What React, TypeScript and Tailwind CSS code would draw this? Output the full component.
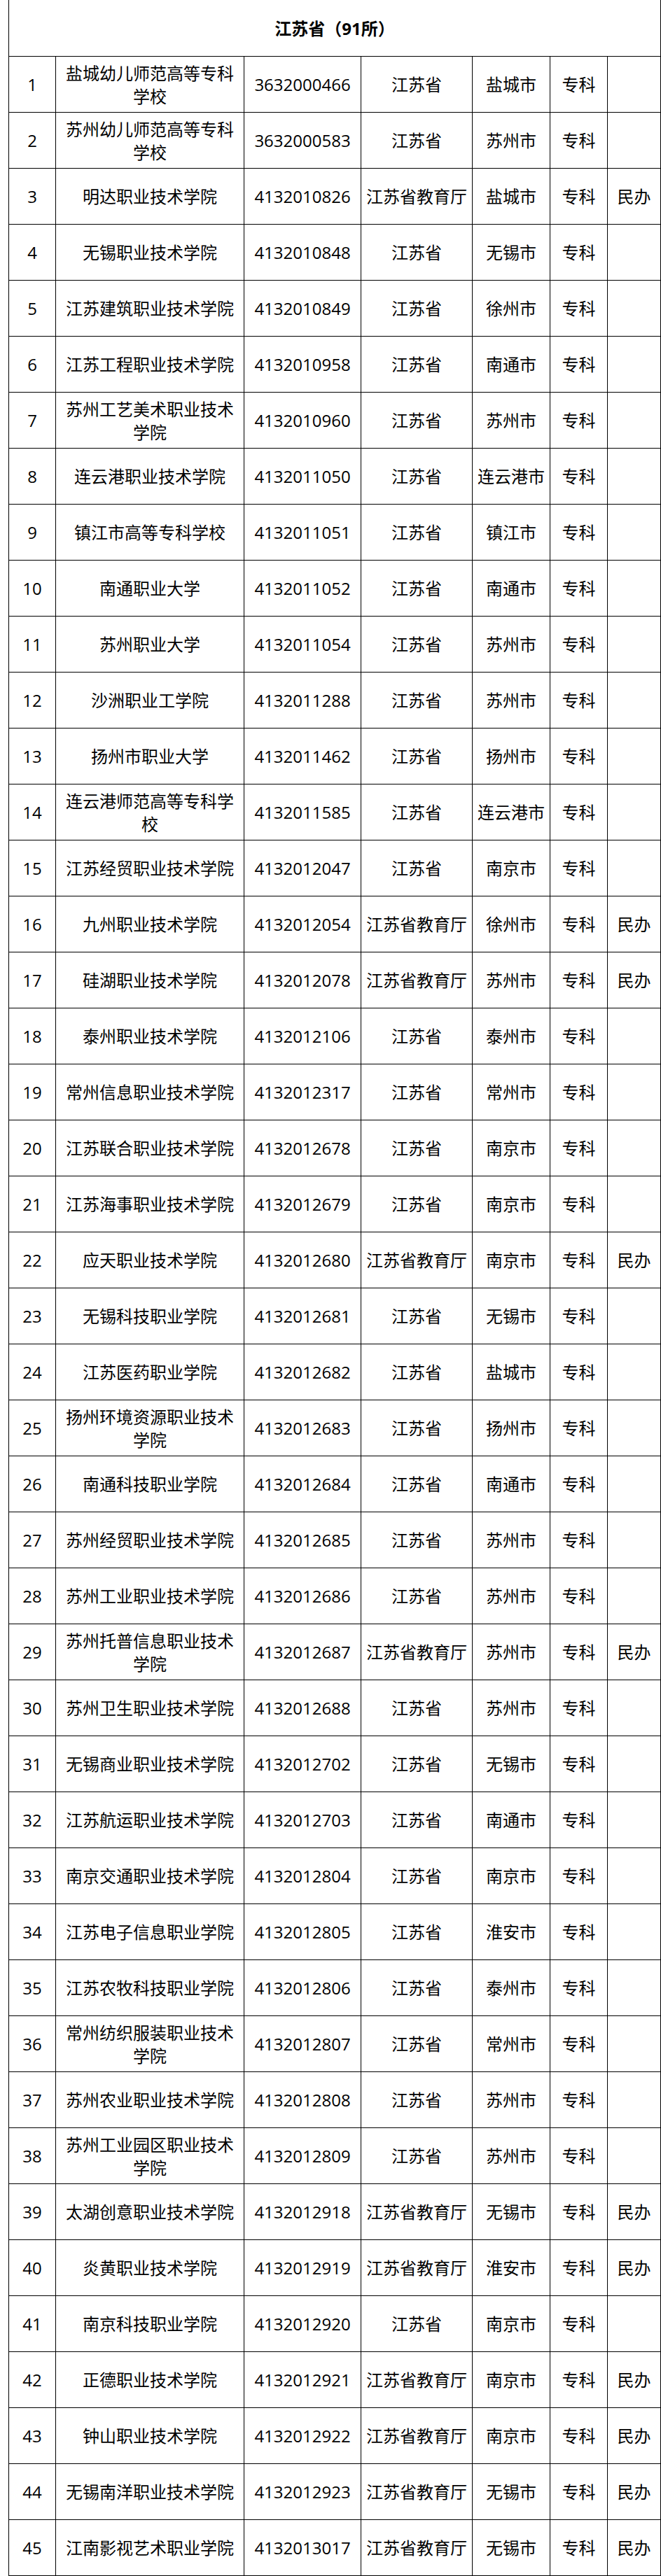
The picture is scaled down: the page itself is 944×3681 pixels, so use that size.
const rows: [string, string, string, string, string][] = [
  ["盐城幼儿师范高等专科学校", "3632000466", "江苏省", "盐城市", ""],
  ["苏州幼儿师范高等专科学校", "3632000583", "江苏省", "苏州市", ""],
  ["明达职业技术学院", "4132010826", "江苏省教育厅", "盐城市", "民办"],
  ["无锡职业技术学院", "4132010848", "江苏省", "无锡市", ""],
  ["江苏建筑职业技术学院", "4132010849", "江苏省", "徐州市", ""],
  ["江苏工程职业技术学院", "4132010958", "江苏省", "南通市", ""],
  ["苏州工艺美术职业技术学院", "4132010960", "江苏省", "苏州市", ""],
  ["连云港职业技术学院", "4132011050", "江苏省", "连云港市", ""],
  ["镇江市高等专科学校", "4132011051", "江苏省", "镇江市", ""],
  ["南通职业大学", "4132011052", "江苏省", "南通市", ""],
  ["苏州职业大学", "4132011054", "江苏省", "苏州市", ""],
  ["沙洲职业工学院", "4132011288", "江苏省", "苏州市", ""],
  ["扬州市职业大学", "4132011462", "江苏省", "扬州市", ""],
  ["连云港师范高等专科学校", "4132011585", "江苏省", "连云港市", ""],
  ["江苏经贸职业技术学院", "4132012047", "江苏省", "南京市", ""],
  ["九州职业技术学院", "4132012054", "江苏省教育厅", "徐州市", "民办"],
  ["硅湖职业技术学院", "4132012078", "江苏省教育厅", "苏州市", "民办"],
  ["泰州职业技术学院", "4132012106", "江苏省", "泰州市", ""],
  ["常州信息职业技术学院", "4132012317", "江苏省", "常州市", ""],
  ["江苏联合职业技术学院", "4132012678", "江苏省", "南京市", ""],
  ["江苏海事职业技术学院", "4132012679", "江苏省", "南京市", ""],
  ["应天职业技术学院", "4132012680", "江苏省教育厅", "南京市", "民办"],
  ["无锡科技职业学院", "4132012681", "江苏省", "无锡市", ""],
  ["江苏医药职业学院", "4132012682", "江苏省", "盐城市", ""],
  ["扬州环境资源职业技术学院", "4132012683", "江苏省", "扬州市", ""],
  ["南通科技职业学院", "4132012684", "江苏省", "南通市", ""],
  ["苏州经贸职业技术学院", "4132012685", "江苏省", "苏州市", ""],
  ["苏州工业职业技术学院", "4132012686", "江苏省", "苏州市", ""],
  ["苏州托普信息职业技术学院", "4132012687", "江苏省教育厅", "苏州市", "民办"],
  ["苏州卫生职业技术学院", "4132012688", "江苏省", "苏州市", ""],
  ["无锡商业职业技术学院", "4132012702", "江苏省", "无锡市", ""],
  ["江苏航运职业技术学院", "4132012703", "江苏省", "南通市", ""],
  ["南京交通职业技术学院", "4132012804", "江苏省", "南京市", ""],
  ["江苏电子信息职业学院", "4132012805", "江苏省", "淮安市", ""],
  ["江苏农牧科技职业学院", "4132012806", "江苏省", "泰州市", ""],
  ["常州纺织服装职业技术学院", "4132012807", "江苏省", "常州市", ""],
  ["苏州农业职业技术学院", "4132012808", "江苏省", "苏州市", ""],
  ["苏州工业园区职业技术学院", "4132012809", "江苏省", "苏州市", ""],
  ["太湖创意职业技术学院", "4132012918", "江苏省教育厅", "无锡市", "民办"],
  ["炎黄职业技术学院", "4132012919", "江苏省教育厅", "淮安市", "民办"],
  ["南京科技职业学院", "4132012920", "江苏省", "南京市", ""],
  ["正德职业技术学院", "4132012921", "江苏省教育厅", "南京市", "民办"],
  ["钟山职业技术学院", "4132012922", "江苏省教育厅", "南京市", "民办"],
  ["无锡南洋职业技术学院", "4132012923", "江苏省教育厅", "无锡市", "民办"],
  ["江南影视艺术职业学院", "4132013017", "江苏省教育厅", "无锡市", "民办"],
];

const cell = "flex items-center justify-center text-center border-r border-black";

export default function App() {
  return (
    <div className="bg-white text-black font-['Open_Sans','Noto_Sans_CJK_SC',sans-serif] text-[24px] leading-[33px]">
      <div className="ml-[12px] w-[932px] border-l border-r border-black">
        {/* title */}
        <div className="h-[81px] border-b border-black flex items-center justify-center font-bold">
          江苏省（91所）
        </div>

        {rows.map((r, i) => (
          <div key={i} className="h-[80px] border-b border-black flex">
            <div className={`${cell} w-[67px]`}>{i + 1}</div>
            <div className={`${cell} w-[269px] px-[8px]`}>{r[0]}</div>
            <div className={`${cell} w-[167px]`}>{r[1]}</div>
            <div className={`${cell} w-[159px]`}>{r[2]}</div>
            <div className={`${cell} w-[111px]`}>{r[3]}</div>
            <div className={`${cell} w-[82px]`}>专科</div>
            <div className="flex items-center justify-center text-center w-[75px]">{r[4]}</div>
          </div>
        ))}
      </div>
    </div>
  );
}
